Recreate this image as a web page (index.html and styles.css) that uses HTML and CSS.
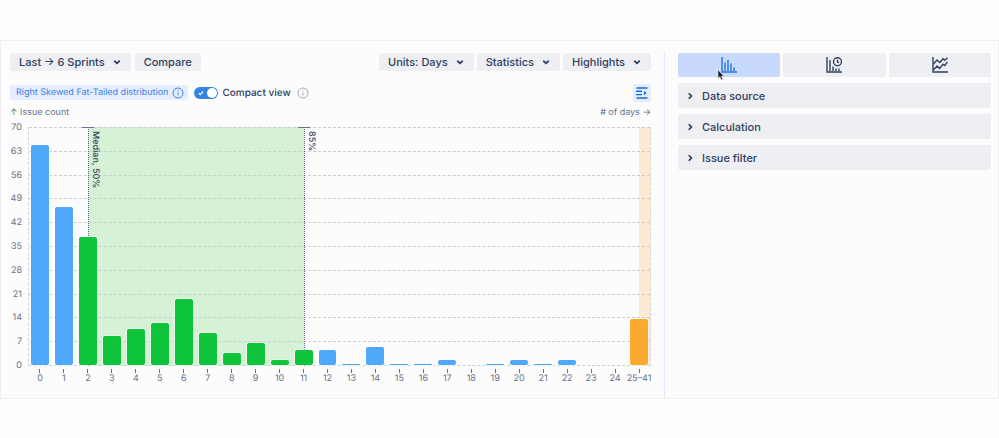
FILE: index.html
```html
<!DOCTYPE html>
<html lang="en">

<head>
  <meta charset="UTF-8">
  <meta name="viewport" content="width=device-width, initial-scale=1.0">
  <title>Sprint histogram</title>
  <link rel="stylesheet" href="styles.css">
</head>

<body>
  <div class="widget">
    <main class="report">
      <div class="toolbar">
        <button type="button" class="btn" aria-haspopup="true">Last → 6 Sprints
          <svg class="chevron" viewBox="0 0 8 8"><path d="M1.8 3 4 5.100l2.200-2.100" /></svg>
        </button>
        <button type="button" class="btn">Compare</button>
        <div class="toolbar__right">
          <button type="button" class="btn" aria-haspopup="true">Units: Days
            <svg class="chevron" viewBox="0 0 8 8"><path d="M1.8 3 4 5.100l2.200-2.100" /></svg>
          </button>
          <button type="button" class="btn" aria-haspopup="true">Statistics
            <svg class="chevron" viewBox="0 0 8 8"><path d="M1.8 3 4 5.100l2.200-2.100" /></svg>
          </button>
          <button type="button" class="btn" aria-haspopup="true">Highlights
            <svg class="chevron" viewBox="0 0 8 8"><path d="M1.8 3 4 5.100l2.200-2.100" /></svg>
          </button>
        </div>
      </div>

      <div class="options">
        <span class="chip">Right Skewed Fat-Tailed distribution
          <svg class="info" viewBox="0 0 12 12"><circle cx="6" cy="6" r="5" /><path d="M6 5.4v3M6 3.2v1" /></svg>
        </span>
        <label class="switch">
          <input type="checkbox" class="switch__input" checked>
          <span class="switch__track">
            <svg class="switch__check" viewBox="0 0 8 8"><path d="m1 4.2 1.9 1.9L6.8 2" /></svg>
          </span>
          Compact view
        </label>
        <svg class="info info--muted" viewBox="0 0 12 12"><circle cx="6" cy="6" r="5" /><path d="M6 5.4v3M6 3.2v1" /></svg>
        <button type="button" class="icon-btn" aria-label="Toggle side panel">
          <svg viewBox="0 0 12 12">
            <path d="M.5 1h11M0 4.300h6M0 7.600h6M.5 11h11" />
            <path d="M8 3.800 10.500 6 8 8.200z" fill="currentColor" stroke="none" />
          </svg>
        </button>
      </div>

      <div class="axis-titles">
        <span>↑ Issue count</span>
        <span># of days →</span>
      </div>

      <div class="chart">
        <ul class="y-axis">
          <li>70</li>
          <li>63</li>
          <li>56</li>
          <li>49</li>
          <li>42</li>
          <li>35</li>
          <li>28</li>
          <li>21</li>
          <li>14</li>
          <li>7</li>
          <li>0</li>
        </ul>

        <div class="plot">
          <!-- two grid columns per bar, so a band can start at the middle of a bar -->
          <div class="bands">
            <div class="band band--middle"></div>
            <div class="band band--tail"></div>
          </div>
          <div class="gridlines">
            <i></i><i></i><i></i><i></i><i></i><i></i><i></i><i></i><i></i><i></i><i></i>
          </div>
          <div class="bands">
            <div class="marker marker--median">Median, 50%</div>
            <div class="marker marker--85">85%</div>
          </div>
          <div class="bars">
            <div class="bar" style="--value: 65"></div>
            <div class="bar" style="--value: 47"></div>
            <div class="bar bar--green" style="--value: 38"></div>
            <div class="bar bar--green" style="--value: 9"></div>
            <div class="bar bar--green" style="--value: 11"></div>
            <div class="bar bar--green" style="--value: 13"></div>
            <div class="bar bar--green" style="--value: 20"></div>
            <div class="bar bar--green" style="--value: 10"></div>
            <div class="bar bar--green" style="--value: 4"></div>
            <div class="bar bar--green" style="--value: 7"></div>
            <div class="bar bar--green" style="--value: 2"></div>
            <div class="bar bar--green" style="--value: 5"></div>
            <div class="bar" style="--value: 5"></div>
            <div class="bar" style="--value: 1"></div>
            <div class="bar" style="--value: 6"></div>
            <div class="bar" style="--value: 1"></div>
            <div class="bar" style="--value: 1"></div>
            <div class="bar" style="--value: 2"></div>
            <div class="bar bar--empty"></div>
            <div class="bar" style="--value: 1"></div>
            <div class="bar" style="--value: 2"></div>
            <div class="bar" style="--value: 1"></div>
            <div class="bar" style="--value: 2"></div>
            <div class="bar bar--empty"></div>
            <div class="bar bar--empty"></div>
            <div class="bar bar--orange" style="--value: 14"></div>
          </div>
        </div>

        <ul class="x-axis">
          <li>0</li>
          <li>1</li>
          <li>2</li>
          <li>3</li>
          <li>4</li>
          <li>5</li>
          <li>6</li>
          <li>7</li>
          <li>8</li>
          <li>9</li>
          <li>10</li>
          <li>11</li>
          <li>12</li>
          <li>13</li>
          <li>14</li>
          <li>15</li>
          <li>16</li>
          <li>17</li>
          <li>18</li>
          <li>19</li>
          <li>20</li>
          <li>21</li>
          <li>22</li>
          <li>23</li>
          <li>24</li>
          <li>25–41</li>
        </ul>
      </div>
    </main>

    <aside class="settings">
      <div class="tabs" role="tablist">
        <button type="button" class="tab tab--active" role="tab" aria-selected="true" aria-label="Histogram">
          <svg viewBox="0 0 16 16"><path d="M1 0v15h15M4 14V5.5M7 14V3M10 14V6.500M13 14v-3.500" /></svg>
          <svg class="cursor" viewBox="0 0 8 12"><path d="M1 .8v8.600l1.900-1.700 1.400 3.300 1.500-.6-1.400-3.200h2.500z" /></svg>
        </button>
        <button type="button" class="tab" role="tab" aria-selected="false" aria-label="Time histogram">
          <svg viewBox="0 0 16 16">
            <path d="M1 0v15h15M4 14V3M7 14V9.500M10 14v-2.500M13 14v-2.500" />
            <circle cx="11.500" cy="4.700" r="4" />
            <path d="M11.500 2.700v2.300l1.500.7" />
          </svg>
        </button>
        <button type="button" class="tab" role="tab" aria-selected="false" aria-label="Trend">
          <svg viewBox="0 0 16 16">
            <path d="M1 0v15h15" />
            <path d="m1.500 7 3.500-4 2.700 2.500L11 1.800l1.700 1.500L15.500.8M1.500 13 5 9l2.700 2.500L11 7.300l1.700 1.200 2.800-3.500" />
          </svg>
        </button>
      </div>
      <button type="button" class="section" aria-expanded="false">
        <svg class="chevron" viewBox="0 0 8 8"><path d="M3 1.800 5.100 4 3 6.200" /></svg>Data source
      </button>
      <button type="button" class="section" aria-expanded="false">
        <svg class="chevron" viewBox="0 0 8 8"><path d="M3 1.800 5.100 4 3 6.200" /></svg>Calculation
      </button>
      <button type="button" class="section" aria-expanded="false">
        <svg class="chevron" viewBox="0 0 8 8"><path d="M3 1.800 5.100 4 3 6.200" /></svg>Issue filter
      </button>
    </aside>
  </div>
</body>

</html>
```

FILE: styles.css
```css
* {
  box-sizing: border-box;
}

body {
  margin: 0;
  padding: 40px 0;
  background: #fefefe;
  color: #2f4060;
  font-family: Inter, "Liberation Sans", sans-serif;
  font-size: 11px;
  text-rendering: geometricPrecision;
}

button {
  border: none;
  color: inherit;
  font: inherit;
  font-weight: 500;
  cursor: pointer;
}

ul {
  margin: 0;
  padding: 0;
  list-style: none;
}

svg {
  display: block;
  flex: none;
  fill: none;
  stroke: currentColor;
}

.widget {
  display: grid;
  grid-template-columns: 2fr 1fr;
  padding: 12px 7px 0 9px;
  background: #fcfcfd;
  border: 1px solid #efeff1;
}

/* left side */

.report {
  padding: 0 13px 14px 0;
}

.toolbar {
  display: flex;
  gap: 4px;
}

.toolbar__right {
  display: flex;
  gap: 3px;
  margin-left: auto;
}

.btn {
  display: flex;
  align-items: center;
  gap: 7px;
  height: 18px;
  padding: 0 9px;
  background: #eeeff2;
  border-radius: 2px;
}

.chevron {
  width: 10px;
  height: 10px;
  stroke-width: 1.4;
}

.options {
  display: flex;
  align-items: center;
  gap: 6px;
  height: 19px;
  margin-top: 12px;
}

.chip {
  display: flex;
  align-items: center;
  gap: 4px;
  height: 15px;
  padding: 0 4px 0 6px;
  background: #e6edfc;
  border-radius: 3px;
  color: #3d82e4;
  font-size: 9px;
}

.info {
  width: 12px;
  height: 12px;
}

.info--muted {
  color: #a3a9b5;
}

.switch {
  display: flex;
  align-items: center;
  gap: 4px;
  font-size: 10px;
  font-weight: 500;
  cursor: pointer;
}

.switch__input {
  position: absolute;
  opacity: 0;
}

.switch__track {
  display: flex;
  align-items: center;
  justify-content: space-between;
  width: 24px;
  height: 12px;
  padding: 0 1px 0 4px;
  background: #3584e4;
  border-radius: 6px;
  color: #fff;
}

.switch__track::after {
  content: "";
  width: 10px;
  height: 10px;
  background: #fff;
  border-radius: 50%;
}

.switch__check {
  width: 6px;
  height: 6px;
  stroke-width: 1.5;
}

.icon-btn {
  display: grid;
  place-items: center;
  width: 18px;
  height: 18px;
  margin-left: auto;
  padding: 0;
  background: #e3edfd;
  border-radius: 3px;
  color: #1868db;
}

.icon-btn svg {
  width: 12px;
  height: 12px;
  stroke-width: 1.4;
}

.axis-titles {
  display: flex;
  justify-content: space-between;
  margin: 5px 0 8px;
  color: #66728a;
  font-size: 9px;
  line-height: 12px;
}

/* chart */

.chart {
  display: grid;
  grid-template-columns: 12px 1fr;
  column-gap: 6px;
  color: #66728a;
  font-size: 9px;
}

.y-axis {
  display: flex;
  flex-direction: column;
  justify-content: space-between;
  text-align: right;
  line-height: 1px;
}

.plot {
  display: grid;
  height: 239px;
}

.plot > * {
  grid-area: 1 / 1;
}

.gridlines {
  display: flex;
  flex-direction: column;
  justify-content: space-between;
  border: 1px dashed #d3d7d9;
  border-width: 0 1px;
}

.gridlines i {
  border-top: 1px dashed #c9cfcf;
}

.bands {
  display: grid;
  grid-template-columns: repeat(52, minmax(0, 1fr));
}

.band,
.marker {
  grid-row: 1;
}

.band--middle {
  grid-column: 6 / 24;
  background: #d5f2d7;
}

.band--tail {
  grid-column: 52 / 53;
  background: #fdead3;
}

.marker {
  position: relative;
  padding: 4px 0;
  border-left: 1px dotted #5d6885;
  color: #3b4766;
  font-size: 9px;
  font-weight: 500;
  line-height: 12px;
  white-space: nowrap;
  writing-mode: vertical-rl;
  justify-self: start;
}

.marker::before {
  content: "";
  position: absolute;
  top: 0;
  left: -7px;
  width: 12px;
  height: 1px;
  background: #66728a;
}

.marker--median {
  grid-column: 6 / 24;
}

.marker--85 {
  grid-column: 24 / 30;
}

.bars,
.x-axis {
  display: grid;
  grid-template-columns: repeat(26, minmax(0, 1fr));
}

.bars {
  z-index: 1;
  align-items: end;
}

.bar {
  height: calc(var(--value) / 70 * 100% - 2px);
  margin: 0 3px 1px;
  background: #50a8fc;
  border-radius: 2px;
  box-shadow: 0 0 0 1px rgba(255, 255, 255, .5);
}

.bar--green {
  background: #0dc43a;
}

.bar--orange {
  background: #faaa2f;
}

.bar--empty {
  height: 0;
  visibility: hidden;
}

.x-axis {
  grid-column: 2;
  padding-top: 3px;
}

.x-axis li {
  display: flex;
  flex-direction: column;
  align-items: center;
  line-height: 11px;
  white-space: nowrap;
}

.x-axis li::before {
  content: "";
  width: 1px;
  height: 4px;
  background: #66728a;
}

/* right side */

.settings {
  display: flex;
  flex-direction: column;
  gap: 6px;
  padding-left: 13px;
  border-left: 1px solid #e0e9fa;
}

.tabs {
  display: grid;
  grid-template-columns: repeat(3, 1fr);
  gap: 3px;
}

.tab {
  position: relative;
  display: grid;
  place-items: center;
  height: 24px;
  padding: 0;
  background: #eeeff2;
  border-radius: 2px;
}

.tab svg {
  width: 16px;
  height: 16px;
  stroke-width: 1.4;
}

.tab--active {
  background: #c8dafc;
  color: #2474df;
}

.tab .cursor {
  position: absolute;
  top: 16px;
  left: 39px;
  width: 8px;
  height: 12px;
  fill: #1d1f24;
  stroke: #fff;
  stroke-width: .5;
}

.section {
  display: flex;
  align-items: center;
  gap: 7px;
  height: 25px;
  padding: 0 7px;
  background: #eeeff2;
  border-radius: 2px;
  text-align: left;
}
```
